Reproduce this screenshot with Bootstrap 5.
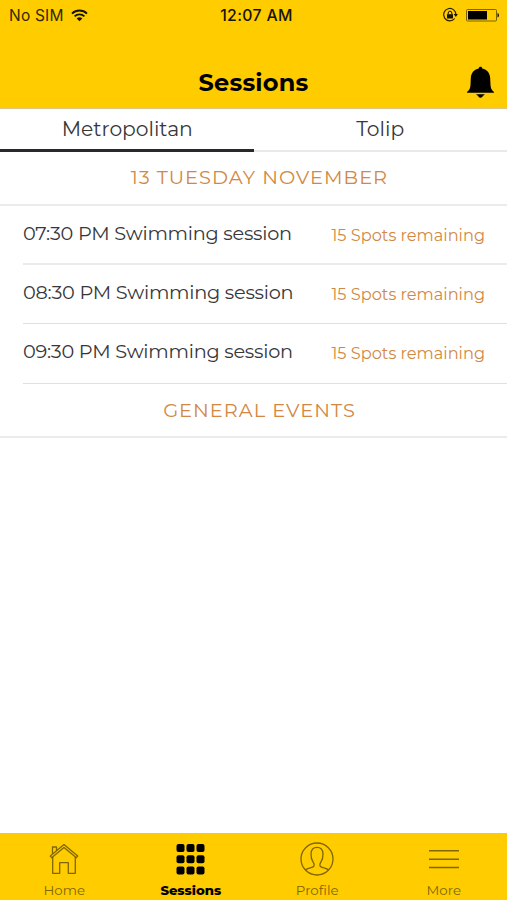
<!DOCTYPE html>
<html lang="en">
<head>
<meta charset="utf-8">
<meta name="viewport" content="width=device-width, initial-scale=1">
<title>Sessions</title>
<link href="https://cdn.jsdelivr.net/npm/bootstrap@5.3.0/dist/css/bootstrap.min.css" rel="stylesheet">
<style>
  body { font-family: Montserrat, Inter, "Open Sans", sans-serif; color: #37373a; background: #fff; line-height: 1; }
  .screen { height: 900px; }
  .bg-brand { background: #fc0; color: #000; }
  .app-header { height: 109px; border-bottom: 1px solid #dcc386; }
  .status-bar { height: 31px; font-family: Inter, sans-serif; font-size: 15.5px; padding: 0 8px 0 9px; }
  .status-bar > * { flex: 1 1 0; }
  .carrier { color: #332900; letter-spacing: .2px; gap: 7px; }
  .clock { font-size: 15.8px; font-weight: 500; letter-spacing: .35px; color: #181300; padding-left: 5px; }
  .status-icons { padding-bottom: 2px; }
  .title-bar { height: 77px; padding-top: 28px; }
  .title-text { font-size: 24px; font-weight: 700; letter-spacing: .2px; }
  .bell { right: 12px; top: 35px; }
  .tab-item { height: 43px; padding: 0 0 1px; font-size: 20.3px; color: #37373a; border-bottom: 2px solid #e9e9eb; border-radius: 0; }
  .tab-item:hover, .tab-item:focus { color: #37373a; }
  .tab-item.active { border-bottom: 3px solid #29292d; padding: 0 0 0 1px; }
  .section-head { height: 54px; padding-left: 12px; border-bottom: 2px solid #ebebed; color: #d28843; font-size: 19.4px; letter-spacing: 1px; }
  .section-head.events { height: 54.4px; padding-top: 2px; }
  .session-row { height: 59px; margin-left: 23px; padding: 0 22px 2px 0; border-bottom: 2px solid #ebebed; }
  .session-row ~ .session-row { height: 59.3px; border-bottom: 1px solid #e0e0e2; padding-bottom: 3px; }
  .session-name { font-size: 19.3px; letter-spacing: -.24px; }
  .spots { font-size: 16.2px; color: #d28843; padding-top: 2.5px; }
  .tab-bar { height: 67px; border-top: 1px solid #e0c468; padding-left: 1px; }
  .tab-bar .tab-link { color: #806600; font-size: 13.4px; padding-top: 8px; }
  .tab-bar .tab-link svg { margin-bottom: 8px; }
  .tab-bar .tab-link.active { color: #000; font-size: 13.2px; font-weight: 800; }
</style>
<script src="https://cdn.jsdelivr.net/npm/bootstrap@5.3.0/dist/js/bootstrap.bundle.min.js"></script>
</head>
<body>
<div class="screen d-flex flex-column overflow-hidden">
  <header class="app-header bg-brand flex-shrink-0">
    <div class="status-bar d-flex align-items-center">
      <div class="carrier d-flex align-items-center"><span>No SIM</span>
        <svg width="17" height="13" viewBox="0 0 17 13" fill="none" stroke="#181300" stroke-width="1.9"><path d="M1 4.600a10.800 10.800 0 0 1 15 0M3.600 7.400a7 7 0 0 1 9.800 0"/><path d="M8.500 12.300 5.700 9.500a4 4 0 0 1 5.600 0z" fill="#181300" stroke="none"/></svg>
      </div>
      <div class="clock text-center">12:07 AM</div>
      <div class="status-icons d-flex justify-content-end align-items-center">
        <svg width="57" height="16" viewBox="0 0 57 16"><path d="M12.700 11.500A6.200 6.200 0 1 1 14 8" fill="none" stroke="#2b2200" stroke-width="1.200"/><path d="M11.700 7h4.200l-2.100 3z" fill="#181300"/><path d="M5 7.200h6v4.300H5z" fill="#181300"/><path d="M6.200 7.300V6a1.800 1.800 0 0 1 3.600 0v1.300" fill="none" stroke="#181300"/><rect x="24.500" y="2.500" width="30" height="11.500" rx="1" fill="none" stroke="#7a6200"/><path d="M26 4h19v8.500H26z" fill="#000"/><path d="M55.500 6q1.500.2 1.500 2.200t-1.500 2.200z" fill="#181300"/></svg>
      </div>
    </div>
    <div class="title-bar position-relative d-flex align-items-center justify-content-center">
      <h1 class="title-text m-0">Sessions</h1>
      <svg class="bell position-absolute" width="29" height="33" viewBox="0 0 29 33" fill="#000"><path d="M14.500 .8c1 0 1.700.7 1.700 1.600 5 .9 7.800 4.800 8 9.800l.3 6.500c.2 3.500 1 5.300 3.500 7.200v.9H1v-.9c2.500-1.900 3.300-3.700 3.500-7.200l.3-6.500c.2-5 3-8.900 8-9.800 0-.9.700-1.600 1.700-1.600zM10.300 28.300h8.400c-.3.800-.9 1.100-1.700 1.300-.4 1.500-1.300 2.200-2.500 2.200s-2.100-.7-2.500-2.200c-.8-.2-1.400-.5-1.700-1.300z"/></svg>
    </div>
  </header>
  <ul class="nav nav-fill flex-nowrap flex-shrink-0">
    <li class="nav-item w-50"><a class="nav-link tab-item active d-flex align-items-center justify-content-center" href="#">Metropolitan</a></li>
    <li class="nav-item w-50"><a class="nav-link tab-item d-flex align-items-center justify-content-center" href="#">Tolip</a></li>
  </ul>
  <main class="flex-grow-1">
    <div class="section-head d-flex align-items-center justify-content-center">13 TUESDAY NOVEMBER</div>
    <div class="session-row d-flex align-items-center justify-content-between"><span class="session-name">07:30 PM Swimming session</span><span class="spots">15 Spots remaining</span></div>
    <div class="session-row d-flex align-items-center justify-content-between"><span class="session-name">08:30 PM Swimming session</span><span class="spots">15 Spots remaining</span></div>
    <div class="session-row d-flex align-items-center justify-content-between"><span class="session-name">09:30 PM Swimming session</span><span class="spots">15 Spots remaining</span></div>
    <div class="section-head events d-flex align-items-center justify-content-center">GENERAL EVENTS</div>
  </main>
  <nav class="tab-bar bg-brand row g-0 flex-shrink-0">
    <a class="tab-link col-3 d-flex flex-column align-items-center text-decoration-none" href="#">
      <svg width="32" height="34" viewBox="0 0 32 34" fill="none" stroke="currentColor" stroke-width="1.300" stroke-linejoin="round"><path d="M2.300 14 16 2.600 29.700 14l-1.300 1.700L16 5.500 3.600 15.700z"/><path d="M4.500 11.800V5h4v3.500M4.700 15v16.300h7V20.700h8.600v10.600h7V15"/></svg>
      <span>Home</span></a>
    <a class="tab-link active col-3 d-flex flex-column align-items-center text-decoration-none" href="#">
      <svg width="32" height="34" viewBox="0 0 32 34" fill="currentColor"><rect x="1.500" y="2" width="8" height="8" rx="2"/><rect x="11.500" y="2" width="8" height="8" rx="2"/><rect x="21.500" y="2" width="8" height="8" rx="2"/><rect x="1.500" y="13.300" width="8" height="8" rx="2"/><rect x="11.500" y="13.300" width="8" height="8" rx="2"/><rect x="21.500" y="13.300" width="8" height="8" rx="2"/><rect x="1.500" y="24.600" width="8" height="8" rx="2"/><rect x="11.500" y="24.600" width="8" height="8" rx="2"/><rect x="21.500" y="24.600" width="8" height="8" rx="2"/></svg>
      <span>Sessions</span></a>
    <a class="tab-link col-3 d-flex flex-column align-items-center text-decoration-none" href="#">
      <svg width="34" height="34" viewBox="0 0 34 34" fill="none" stroke="currentColor" stroke-width="1.300"><circle cx="17" cy="17" r="16"/><path d="M5.500 28c2-1.700 5.500-2 7.500-3.100 1.600-.9 1.300-2.900.4-4.300-1.600-2.500-2.600-5.600-2.400-8.900.2-4.200 2.400-6.400 6-6.400s5.800 2.200 6 6.400c.2 3.300-.8 6.400-2.400 8.900-.9 1.400-1.200 3.400.4 4.300 2 1.100 5.500 1.400 7.500 3.100"/></svg>
      <span>Profile</span></a>
    <a class="tab-link col-3 d-flex flex-column align-items-center text-decoration-none" href="#">
      <svg width="32" height="34" viewBox="0 0 32 34" stroke="currentColor" stroke-width="1.500"><path d="M1 8.700h30M1 17.200h30M1 25.600h30"/></svg>
      <span>More</span></a>
  </nav>
</div>
</body>
</html>
